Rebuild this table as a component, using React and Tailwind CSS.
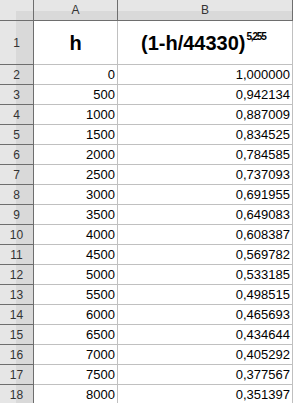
const rows = [
  [0, "1,000000"],
  [500, "0,942134"],
  [1000, "0,887009"],
  [1500, "0,834525"],
  [2000, "0,784585"],
  [2500, "0,737093"],
  [3000, "0,691955"],
  [3500, "0,649083"],
  [4000, "0,608387"],
  [4500, "0,569782"],
  [5000, "0,533185"],
  [5500, "0,498515"],
  [6000, "0,465693"],
  [6500, "0,434644"],
  [7000, "0,405292"],
  [7500, "0,377567"],
  [8000, "0,351397"],
];

function RowHead({ children, h }) {
  return (
    <div
      className={`${h} flex items-center justify-center border-r border-b border-[#6e6e6e] bg-[linear-gradient(to_right,#e6e6e6_0px,#e6e6e6_16px,#d9d9d9_16px,#d9d9d9_100%)] text-[12px] text-[#333]`}
    >
      {children}
    </div>
  );
}

export default function App() {
  return (
    <div
      className="w-[293px] h-[403px] overflow-hidden bg-white"
      style={{ fontFamily: '"Liberation Sans", Arial, sans-serif' }}
    >
      <div className="grid grid-cols-[34px_84px_175px]">
        {/* header row */}
        <div className="h-[21px] border-r border-b border-[#6e6e6e] bg-[linear-gradient(to_bottom,#e6e6e6_0px,#e6e6e6_11px,#d9d9d9_11px,#d9d9d9_100%)] relative">
          <div className="absolute left-0 top-0 w-[16px] h-full bg-[#e6e6e6]" />
        </div>
        <div className="h-[21px] flex items-center justify-center border-r border-b border-[#6e6e6e] bg-[linear-gradient(to_bottom,#e6e6e6_0px,#e6e6e6_11px,#d9d9d9_11px,#d9d9d9_100%)] text-[12px] text-[#333]">
          A
        </div>
        <div className="h-[21px] flex items-center justify-center border-r border-b border-[#6e6e6e] bg-[linear-gradient(to_bottom,#e6e6e6_0px,#e6e6e6_11px,#d9d9d9_11px,#d9d9d9_100%)] text-[12px] text-[#333]">
          B
        </div>

        {/* row 1 */}
        <RowHead h="h-[44px]">1</RowHead>
        <div className="h-[44px] flex items-center justify-center border-r border-b border-[#c0c0c0] text-[20px] font-bold text-black">
          h
        </div>
        <div className="h-[44px] flex items-center justify-start pl-[23px] border-r border-b border-[#c0c0c0] text-[20px] font-bold text-black leading-none">
          <span className="whitespace-nowrap">
            (1-h/44330)
            <span className="inline-block align-top text-[10px] font-bold tracking-[-1.2px] relative top-[-1px] ml-[1px]">5,255</span>
          </span>
        </div>

        {rows.map(([h, v], i) => (
          <div key={i} className="contents">
            <RowHead h="h-[20px]">{i + 2}</RowHead>
            <div className="h-[20px] flex items-center justify-end pr-[2px] border-r border-b border-[#c0c0c0] text-[13px] text-black">
              {h}
            </div>
            <div className="h-[20px] flex items-center justify-end pr-[2px] border-r border-b border-[#c0c0c0] text-[13px] text-black">
              {v}
            </div>
          </div>
        ))}
      </div>
    </div>
  );
}
